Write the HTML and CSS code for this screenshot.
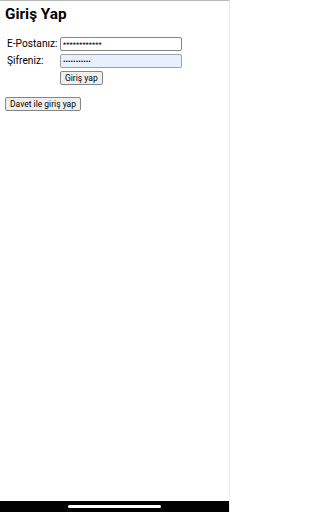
FILE: index.html
```html
<!DOCTYPE html>
<html lang="tr">
<head>
<meta charset="utf-8">
<title>Giriş Yap</title>
<link rel="stylesheet" href="styles.css">
</head>
<body>
<div class="screen">
  <div class="page">
    <h2 class="title">Giriş Yap</h2>
    <form class="login">
      <label class="label" for="email">E-Postanız:</label>
      <input class="field" id="email" type="text" value="************">
      <label class="label" for="pass">Şifreniz:</label>
      <input class="field autofill" id="pass" type="password" value="abcdefghijk">
      <div class="actions"><button class="btn" type="button">Giriş yap</button></div>
    </form>
    <div class="invite-row"><button class="btn" type="button">Davet ile giriş yap</button></div>
  </div>
  <div class="navbar"><span class="pill"></span></div>
</div>
</body>
</html>
```

FILE: styles.css
```css
html, body {
  margin: 0;
  padding: 0;
  background: #fff;
}
body {
  font-family: Roboto, "Noto Sans", "Liberation Sans", sans-serif;
  color: #000;
}
.screen {
  position: relative;
  width: 230px;
  height: 512px;
  box-sizing: border-box;
  border-top: 1px solid #b8b8b8;
  border-right: 1px solid #ececec;
  display: flex;
  flex-direction: column;
}
.page {
  flex: 1;
  padding: 0 5px;
}
.title {
  font-size: 15.3px;
  font-weight: bold;
  line-height: 18px;
  margin: 4px 0 0;
}
.login {
  display: grid;
  grid-template-columns: 51px 122px;
  column-gap: 2px;
  row-gap: 3px;
  align-items: center;
  margin-top: 14px;
  padding-left: 2px;
}
.label {
  font-size: 10.2px;
  line-height: 12px;
}
.actions {
  grid-column: 2;
  display: flex;
}
.field {
  box-sizing: border-box;
  width: 122px;
  height: 14px;
  margin: 0;
  padding: 0 2px;
  border: 1px solid #858585;
  border-radius: 2px;
  font-family: Roboto, "Noto Sans", "Liberation Sans", sans-serif;
  font-size: 7.5px;
  background: #fff;
  color: #000;
  outline: none;
}
.autofill {
  background: #e8f0fe;
  border-color: #9a9ea6;
}
.btn {
  box-sizing: border-box;
  height: 14px;
  margin: 0;
  padding: 0 4px;
  border: 1px solid #858585;
  border-radius: 2px;
  background: #efefef;
  font-family: Roboto, "Noto Sans", "Liberation Sans", sans-serif;
  font-size: 8.5px;
  line-height: 12px;
  color: #000;
}
.invite-row {
  display: flex;
  margin-top: 12px;
}
.navbar {
  height: 11px;
  background: #000;
  display: flex;
  justify-content: center;
  align-items: center;
}
.pill {
  display: block;
  width: 93px;
  height: 3px;
  border-radius: 2px;
  background: #fff;
}
```
